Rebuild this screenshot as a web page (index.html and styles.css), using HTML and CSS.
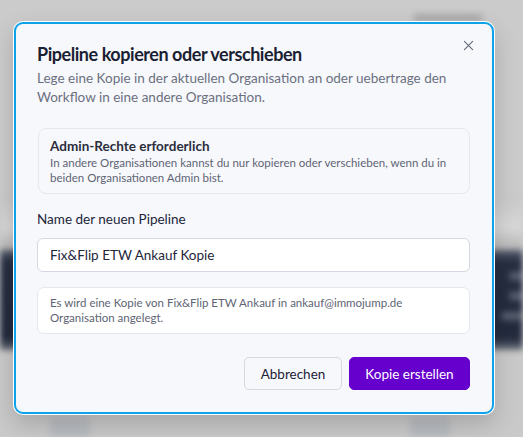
FILE: index.html
```html
<!DOCTYPE html>
<html lang="de">
<head>
<meta charset="utf-8">
<title>Pipeline kopieren oder verschieben</title>
<link rel="stylesheet" href="styles.css">
</head>
<body>
<div class="backdrop">
  <div class="bg-top"><span class="bg-pill"></span></div>
  <div class="bg-light"></div>
  <div class="bg-dark">
    <span class="bg-line l1"></span>
    <span class="bg-line l2"></span>
    <span class="bg-line l3"></span>
  </div>
  <div class="bg-bottom">
    <span class="bg-blob b1"></span>
    <span class="bg-blob b2"></span>
  </div>
</div>

<div class="modal" role="dialog" aria-labelledby="title">
  <button class="close" aria-label="Schließen">
    <svg width="11" height="11" viewBox="0 0 12 12"><path d="M1.5 1.5 L10.5 10.5 M10.5 1.5 L1.5 10.5" stroke="#646a78" stroke-width="1.2" stroke-linecap="round" fill="none"/></svg>
  </button>
  <h1 id="title" class="title">Pipeline kopieren oder verschieben</h1>
  <p class="subtitle">Lege eine Kopie in der aktuellen Organisation an oder uebertrage den Workflow in eine andere Organisation.</p>

  <div class="notice">
    <div class="notice-title">Admin-Rechte erforderlich</div>
    <div class="notice-text">In andere Organisationen kannst du nur kopieren oder verschieben, wenn du in beiden Organisationen Admin bist.</div>
  </div>

  <label class="label" for="name">Name der neuen Pipeline</label>
  <input id="name" class="input" type="text" value="Fix&amp;Flip ETW Ankauf Kopie">

  <div class="info">Es wird eine Kopie von Fix&amp;Flip ETW Ankauf in ankauf@immojump.de Organisation angelegt.</div>

  <div class="actions">
    <button class="btn btn-secondary">Abbrechen</button>
    <button class="btn btn-primary">Kopie erstellen</button>
  </div>
</div>
</body>
</html>
```

FILE: styles.css
```css
* { box-sizing: border-box; }
html, body {
  margin: 0;
  padding: 0;
  width: 523px;
  height: 437px;
  overflow: hidden;
  background: #cbcbcb;
  font-family: "Lato", "Noto Sans", sans-serif;
}

.backdrop {
  position: absolute;
  inset: 0;
  display: flex;
  flex-direction: column;
  filter: blur(3px);
}
.bg-top {
  height: 195px;
  background: #cbcbcb;
  display: flex;
  justify-content: flex-end;
  padding: 14px 40px 0 0;
}
.bg-pill {
  width: 70px;
  height: 8px;
  border-radius: 4px;
  background: #a9a9a9;
}
.bg-light {
  height: 55px;
  background: linear-gradient(#c8c8c8, #d8d8d8 60%, #b5b5b5);
}
.bg-dark {
  height: 100px;
  background: linear-gradient(#5a6070 0, #262e41 12%, #232a3d 88%, #6a6f7a 100%);
  display: flex;
  flex-direction: column;
  align-items: flex-end;
  gap: 12px;
  padding: 22px 0 0 0;
}
.bg-line {
  height: 8px;
  border-radius: 4px;
  background: #5b6272;
}
.bg-line.l1 { width: 14px; }
.bg-line.l2 { width: 14px; }
.bg-line.l3 { width: 22px; }
.bg-bottom {
  flex: 1;
  background: #c9c9c9;
  display: flex;
  align-items: flex-end;
  gap: 320px;
  padding-left: 50px;
}
.bg-blob {
  width: 40px;
  height: 20px;
  background: #b9bcc0;
}

.modal {
  position: absolute;
  left: 14px;
  top: 22px;
  width: 480px;
  height: 392px;
  background: #f7f8fc;
  border: 2px solid #0ea2ea;
  border-radius: 9px;
  box-shadow: 0 0 0 1px #ffffff, 0 10px 25px rgba(0, 0, 0, 0.18);
  padding: 18px 22px 0 21px;
  display: flex;
  flex-direction: column;
}

.close {
  position: absolute;
  top: 15px;
  right: 17px;
  width: 13px;
  height: 13px;
  padding: 0;
  border: 0;
  background: transparent;
  display: flex;
  align-items: center;
  justify-content: center;
}

.title {
  margin: 0;
  font-size: 18px;
  font-weight: 700;
  line-height: 24px;
  letter-spacing: -0.45px;
  color: #1b1f33;
}
.subtitle {
  margin: 3px 0 0 0;
  font-size: 13.5px;
  line-height: 19px;
  color: #6b7080;
}

.notice {
  margin-top: 21px;
  margin-left: 1px;
  border: 1px solid #e6e8ef;
  border-radius: 8px;
  background: #f7f8fc;
  padding: 8px 11px 8px 11px;
}
.notice-title {
  font-size: 13.5px;
  font-weight: 700;
  line-height: 18px;
  color: #2a2e3d;
}
.notice-text {
  font-size: 11.5px;
  line-height: 15px;
  color: #5e6474;
}

.label {
  margin-top: 16px;
  font-size: 13.5px;
  line-height: 18px;
  color: #22263a;
}
.input {
  margin-top: 10px;
  height: 34px;
  width: 100%;
  border: 1px solid #d5d8e0;
  border-radius: 6px;
  background: #ffffff;
  padding: 0 12px;
  font-family: inherit;
  font-size: 13.5px;
  color: #22263a;
}

.info {
  margin-top: 15px;
  border: 1px solid #e6e8ef;
  border-radius: 7px;
  background: #ffffff;
  padding: 7px 12px 8px 12px;
  font-size: 11.5px;
  line-height: 15px;
  color: #5e6474;
}

.actions {
  margin-top: 23px;
  display: flex;
  justify-content: flex-end;
  gap: 7px;
}
.btn {
  height: 33px;
  border-radius: 5px;
  font-family: inherit;
  font-size: 13.5px;
  padding: 0;
  white-space: nowrap;
}
.btn-secondary {
  width: 98px;
  background: #f7f8fc;
  border: 1px solid #d5d8e0;
  color: #1e2235;
}
.btn-primary {
  width: 121px;
  background: #6600cc;
  border: 1px solid #6600cc;
  color: #ffffff;
}
```
